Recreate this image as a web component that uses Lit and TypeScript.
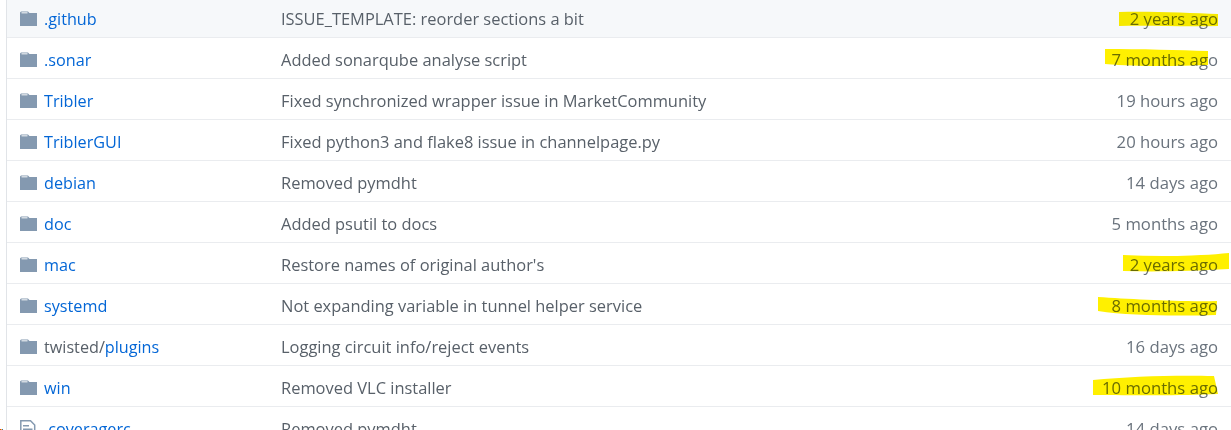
import { LitElement, html, css, svg } from "lit";
import { customElement } from "lit/decorators.js";

type Row = { icon: "dir" | "file"; prefix?: string; name: string; msg: string; age: string };

const ROWS: Row[] = [
  { icon: "dir", name: ".github", msg: "ISSUE_TEMPLATE: reorder sections a bit", age: "2 years ago" },
  { icon: "dir", name: ".sonar", msg: "Added sonarqube analyse script", age: "7 months ago" },
  { icon: "dir", name: "Tribler", msg: "Fixed synchronized wrapper issue in MarketCommunity", age: "19 hours ago" },
  { icon: "dir", name: "TriblerGUI", msg: "Fixed python3 and flake8 issue in channelpage.py", age: "20 hours ago" },
  { icon: "dir", name: "debian", msg: "Removed pymdht", age: "14 days ago" },
  { icon: "dir", name: "doc", msg: "Added psutil to docs", age: "5 months ago" },
  { icon: "dir", name: "mac", msg: "Restore names of original author's", age: "2 years ago" },
  { icon: "dir", name: "systemd", msg: "Not expanding variable in tunnel helper service", age: "8 months ago" },
  { icon: "dir", prefix: "twisted/", name: "plugins", msg: "Logging circuit info/reject events", age: "16 days ago" },
  { icon: "dir", name: "win", msg: "Removed VLC installer", age: "10 months ago" },
  { icon: "file", name: ".coveragerc", msg: "Removed pymdht", age: "14 days ago" },
];

const MARKS = [
  "M1119 12 C1150 11 1190 13 1218 14 L1218 26 C1180 27 1150 25 1119 26 Z",
  "M1105 49 C1140 49 1180 50 1208 51 L1208 65 C1180 66 1140 67 1105 64 Z",
  "M1123 255 C1160 257 1200 256 1229 253 L1229 269 C1190 271 1160 272 1123 271 Z",
  "M1098 297 C1130 299 1180 302 1217 301 L1216 315 C1180 316 1130 316 1098 311 Z",
  "M1093 380 C1130 376 1180 375 1214 376 L1218 394 C1180 396 1130 395 1093 395 Z",
];

@customElement("app-root")
export class AppRoot extends LitElement {
  static styles = css`
    :host {
      display: block;
      position: relative;
      height: 430px;
      overflow: hidden;
      background: #fff;
      font-family: "Open Sans", "Noto Sans", sans-serif;
      font-size: 16.45px;
    }
    .table {
      margin-left: 6px;
      margin-top: -3px;
      border-left: 1px solid #e1e4e8;
      display: flex;
      flex-direction: column;
    }
    .row {
      display: grid;
      grid-template-columns: 274px 1fr auto;
      align-items: center;
      height: 40px;
      border-bottom: 1px solid #eaecef;
      padding-right: 13px;
      color: #586069;
      white-space: nowrap;
    }
    .row.first { background: #f6f8fa; }
    .name {
      display: flex;
      align-items: center;
      padding-left: 13px;
      gap: 7px;
      font-size: 16.2px;
    }
    .icon { flex: none; display: block; margin-top: 3px; }
    .icon.file { margin-top: 6px; }
    .label { padding-top: 3px; }
    .link { color: #0366d6; }
    .prefix { color: #586069; }
    .msg { padding-top: 3px; }
    .age { padding-top: 3px; text-align: right; color: #6a737d; font-size: 16.7px; }
    .marks {
      position: absolute;
      inset: 0;
      width: 1231px;
      height: 430px;
      mix-blend-mode: multiply;
      pointer-events: none;
    }
    .corner {
      position: absolute;
      left: 0;
      bottom: 0;
      width: 3px;
      height: 1px;
      background: linear-gradient(90deg, #d33 0 33%, #fc0 33% 66%, #36c 66%);
    }
  `;

  private icon(kind: Row["icon"]) {
    if (kind === "dir") {
      return html`<svg class="icon" width="17" height="15" viewBox="0 0 17 15">
        <path fill="#8499b0" d="M1 0.5 H8 L9.5 2 H17 V15 H0 V1.5 Z" />
        <path fill="#d3dae2" d="M1.5 1 H7.5 V2.5 H1.5 Z" />
      </svg>`;
    }
    return html`<svg class="icon file" width="17" height="20" viewBox="0 0 17 20">
      <path fill="none" stroke="#8499b0" stroke-width="1.5" d="M0.8 0.8 H10.5 L14.7 5 V19 H0.8 Z" />
      <path fill="#8499b0" d="M3 5 H9 V6.5 H3 Z M3 8.5 H12.5 V10 H3 Z M3 12 H12.5 V13.5 H3 Z" />
    </svg>`;
  }

  render() {
    return html`
      <div class="table">
        ${ROWS.map(
          (r, i) => html`<div class="row ${i === 0 ? "first" : ""}">
            <div class="name">
              ${this.icon(r.icon)}
              <span class="label link">${r.prefix ? html`<span class="prefix">${r.prefix}</span>` : ""}${r.name}</span>
            </div>
            <div class="msg">${r.msg}</div>
            <div class="age">${r.age}</div>
          </div>`
        )}
      </div>
      <svg class="marks" viewBox="0 0 1231 430">
        ${MARKS.map((d) => svg`<path d=${d} fill="#fff000" />`)}
      </svg>
      <div class="corner"></div>
    `;
  }
}
